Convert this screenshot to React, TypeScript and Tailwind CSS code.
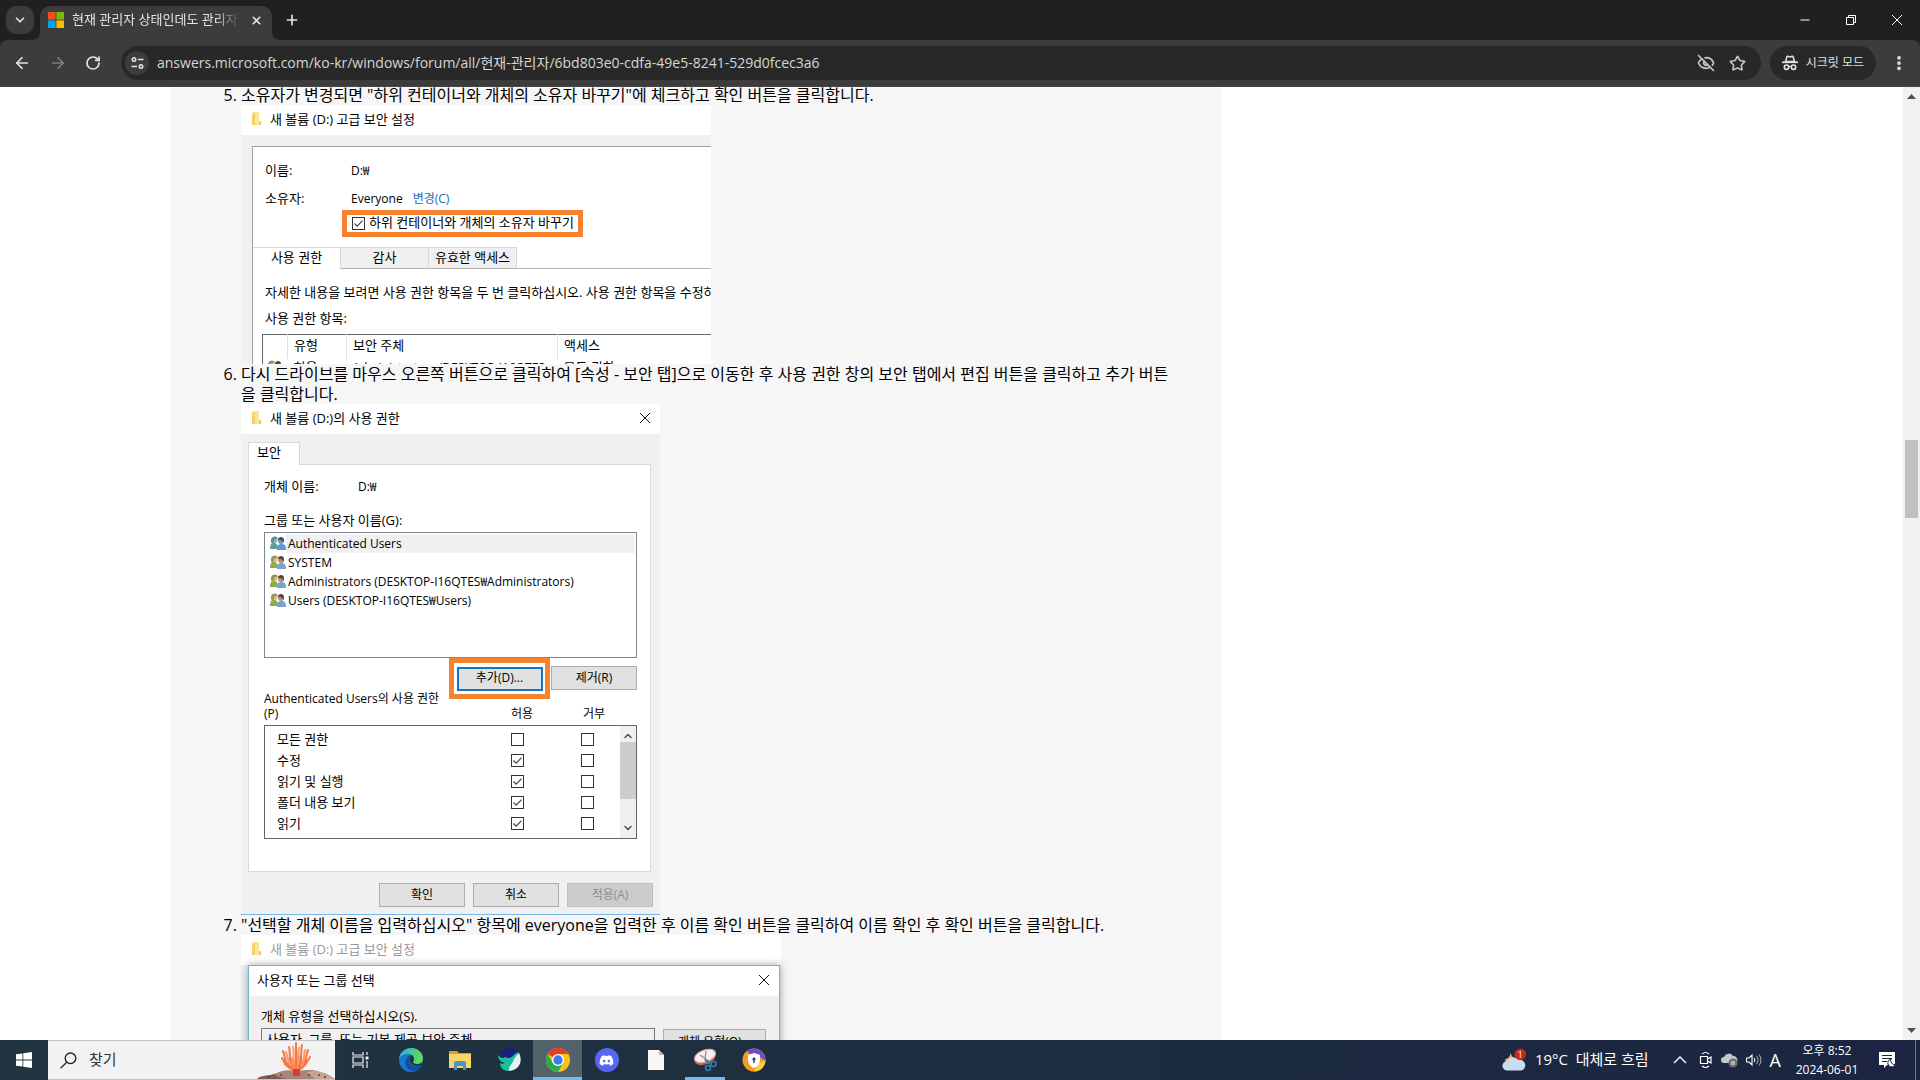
import React from 'react';
import {
  ArrowLeft,
  ArrowRight,
  ChevronDown,
  ChevronUp,
  EyeOff,
  Minus,
  MoreVertical,
  Plus,
  RotateCw,
  Star,
  X,
} from 'lucide-react';
import { FaDiscord } from 'react-icons/fa';

const permissions = [
  { name: '모든 권한', allow: false },
  { name: '수정', allow: true },
  { name: '읽기 및 실행', allow: true },
  { name: '폴더 내용 보기', allow: true },
  { name: '읽기', allow: true },
];

const groups = [
  'Authenticated Users',
  'SYSTEM',
  'Administrators (DESKTOP-I16QTES₩Administrators)',
  'Users (DESKTOP-I16QTES₩Users)',
];

const FolderIcon: React.FC = () => (
  <svg width="10" height="14" viewBox="0 0 10 14" aria-hidden="true">
    <path d="M0 1l1-1h6v9l2 1v3H0z" fill="#fbe39a" />
    <path d="M0 3l3-2v12H0z" fill="#f5d06a" />
    <path d="M8 9h1v4H7z" fill="#e6bd55" />
  </svg>
);

const PeopleIcon: React.FC<{ selected?: boolean }> = ({ selected = false }) => (
  <svg width="16" height="15" viewBox="0 0 16 15" className="shrink-0" aria-hidden="true">
    <path d="M0 13c0-4 1-6 4-6s4 2 4 6z" fill={selected ? '#5f9f98' : '#8dab4c'} />
    <circle cx="4.500" cy="4" r="3" fill={selected ? '#8fb3b8' : '#d3bf8c'} />
    <path d="M1 6c-1-6 6-7 7-3-3-1-4 0-4 3l-2 2z" fill={selected ? '#5d8c94' : '#9a9458'} />
    <path d="M7 14c0-4 1-6 4.500-6S16 10 16 14z" fill={selected ? '#5a98e0' : '#7aa3d4'} />
    <circle cx="11" cy="5" r="3" fill={selected ? '#7f98b4' : '#b58f70'} />
    <path d="M8 4c0-4 6-4 6 0 0 2-1 3-1 3 0-3-2-3-5-3z" fill={selected ? '#3c5068' : '#5a4636'} />
  </svg>
);

const CloseIcon: React.FC = () => (
  <svg width="12" height="12" viewBox="0 0 12 12" stroke="#111111" aria-hidden="true">
    <path d="M1 1l10 10M11 1L1 11" />
  </svg>
);

const CheckBox: React.FC<{ label: string; checked?: boolean; id?: string }> = ({ label, checked, id }) => (
  <span className="relative block h-[13px] w-[13px] shrink-0">
    <input
      type="checkbox"
      id={id}
      aria-label={label}
      defaultChecked={checked}
      className="peer block h-[13px] w-[13px] appearance-none border border-[#333333] bg-white"
    />
    <svg
      viewBox="0 0 13 13"
      className="pointer-events-none absolute inset-0 hidden h-[13px] w-[13px] peer-checked:block"
      aria-hidden="true"
    >
      <path d="M2.500 6.500l2.700 2.700 5.300-5.600" fill="none" stroke="#444444" strokeWidth="1.200" />
    </svg>
  </span>
);

const DialogButton: React.FC<{ children: React.ReactNode; disabled?: boolean; focused?: boolean }> = ({
  children,
  disabled,
  focused,
}) => (
  <button
    type="button"
    disabled={disabled}
    className={
      'flex h-6 w-[86px] items-center justify-center pb-0.5 text-[12px] ' +
      (disabled
        ? 'border border-[#bfbfbf] bg-[#cccccc] text-[#8c8c8c]'
        : focused
          ? 'border-2 border-[#1673bd] bg-[#e1e1e1]'
          : 'border border-[#adadad] bg-[#e1e1e1]')
    }
  >
    {children}
  </button>
);

const IncognitoIcon: React.FC = () => (
  <svg width="16" height="16" viewBox="0 0 16 16" fill="none" stroke="#e3e3e3" aria-hidden="true">
    <path d="M3.500 6.500L5 1.500c1-.6 1.700.4 3 .4s2-1 3-.4l1.500 5z" strokeWidth="1.500" />
    <path d="M0 7.300h16" strokeWidth="1.700" />
    <circle cx="4.500" cy="12.200" r="2.200" strokeWidth="1.600" />
    <circle cx="11.500" cy="12.200" r="2.200" strokeWidth="1.600" />
    <path d="M6.500 11.800q1.500-.8 3 0" strokeWidth="1.300" />
  </svg>
);

const BrowserHeader: React.FC = () => (
  <header className="shrink-0 bg-[#202020] text-[#e3e3e3]">
    <div className="flex h-10 items-center">
      <button type="button" aria-label="탭 검색" className="ml-1.5 flex h-7 w-7 items-center justify-center rounded-[10px] bg-[#3c3c3c]">
        <ChevronDown size={14} strokeWidth={3} />
      </button>
      <div className="relative ml-1.5 flex h-[34px] w-[232px] items-center self-end rounded-t-[10px] bg-[#3c3c3c] px-2 pb-1.5">
        <svg width="8" height="8" viewBox="0 0 8 8" className="absolute bottom-0 -left-2" aria-hidden="true">
          <path d="M8 0v8H0q8 0 8-8z" fill="#3c3c3c" />
        </svg>
        <svg width="8" height="8" viewBox="0 0 8 8" className="absolute -right-2 bottom-0" aria-hidden="true">
          <path d="M0 0v8h8q-8 0-8-8z" fill="#3c3c3c" />
        </svg>
        <svg width="16" height="16" viewBox="0 0 16 16" className="shrink-0" aria-hidden="true">
          <path d="M0 0h7.600v7.600H0z" fill="#f25022" />
          <path d="M8.400 0H16v7.600H8.400z" fill="#7fba00" />
          <path d="M0 8.400h7.600V16H0z" fill="#00a4ef" />
          <path d="M8.400 8.400H16V16H8.400z" fill="#ffb900" />
        </svg>
        <span className="ml-2 flex-1 overflow-hidden mask-r-from-85% text-[13px] whitespace-nowrap">
          현재 관리자 상태인데도 관리자
        </span>
        <button type="button" aria-label="탭 닫기" className="ml-2 flex h-4 w-4 items-center justify-center">
          <X size={13} strokeWidth={3} />
        </button>
      </div>
      <button type="button" aria-label="새 탭" className="ml-3 flex h-4 w-4 items-center justify-center">
        <Plus size={16} strokeWidth={2.5} />
      </button>
      <div className="ml-auto flex h-10">
        <button type="button" aria-label="최소화" className="flex w-[46px] items-center justify-center text-white">
          <Minus size={14} strokeWidth={2} />
        </button>
        <button type="button" aria-label="이전 크기로 복원" className="flex w-[46px] items-center justify-center">
          <svg width="10" height="10" viewBox="0 0 10 10" fill="none" stroke="#ffffff" aria-hidden="true">
            <path d="M.5 2.500h7v7h-7zM2.500 2.500v-2h7v7h-2" />
          </svg>
        </button>
        <button type="button" aria-label="닫기" className="flex w-[46px] items-center justify-center">
          <svg width="10" height="10" viewBox="0 0 10 10" stroke="#ffffff" aria-hidden="true">
            <path d="M0 0l10 10M10 0L0 10" />
          </svg>
        </button>
      </div>
    </div>
    <div className="flex h-[47px] items-center rounded-t-lg border-b border-[#454545] bg-[#3c3c3c] pr-3">
      <div className="flex w-[121px] items-center gap-[18px] pl-[13px]">
        <button type="button" aria-label="뒤로"><ArrowLeft size={18} strokeWidth={2.3} /></button>
        <button type="button" aria-label="앞으로" className="text-[#7e7e7e]"><ArrowRight size={18} strokeWidth={2.3} /></button>
        <button type="button" aria-label="새로고침"><RotateCw size={16} strokeWidth={2.6} /></button>
      </div>
      <div className="flex h-[34px] flex-1 items-center rounded-full bg-[#282828] pr-[15px] pl-1">
        <button type="button" aria-label="사이트 정보 보기" className="flex h-6 w-6 items-center justify-center rounded-full bg-[#3c3c3c]">
          <svg width="13" height="12" viewBox="0 0 13 12" fill="none" stroke="#e3e3e3" strokeWidth="1.600" aria-hidden="true">
            <circle cx="3" cy="2.500" r="1.700" />
            <path d="M7 2.500h5.500M.5 9.500H6" />
            <circle cx="10" cy="9.500" r="1.700" />
          </svg>
        </button>
        <input
          type="text"
          aria-label="주소창"
          defaultValue="answers.microsoft.com/ko-kr/windows/forum/all/현재-관리자/6bd803e0-cdfa-49e5-8241-529d0fcec3a6"
          className="ml-2 min-w-0 flex-1 bg-transparent pb-px text-[14px] text-[#d6d6d6] outline-none"
        />
        <button type="button" aria-label="서드 파티 쿠키 차단됨" className="text-[#c7c7c7]"><EyeOff size={18} strokeWidth={2.3} /></button>
        <button type="button" aria-label="북마크에 추가" className="ml-[14px] text-[#c7c7c7]"><Star size={17} strokeWidth={2.3} /></button>
      </div>
      <button type="button" className="ml-[9px] flex h-[34px] items-center rounded-full bg-[#282828] px-3 text-[12px]">
        <IncognitoIcon />
        <span className="ml-2 pb-px">시크릿 모드</span>
      </button>
      <button type="button" aria-label="메뉴" className="ml-3.5"><MoreVertical size={18} strokeWidth={3} /></button>
    </div>
  </header>
);

const OwnerShot: React.FC = () => (
  <div className="h-[259px] w-[470px] overflow-hidden bg-[#f0f0f0] text-[13px] leading-[15px]">
    <div className="flex h-[30px] items-center gap-2 bg-white pb-0.5 pl-[11px]">
      <FolderIcon />
      <span>새 볼륨 (D:) 고급 보안 설정</span>
    </div>
    <div className="mt-[11px] ml-[11px] border-t border-l border-[#a0a0a0] bg-white">
      <div className="grid grid-cols-[86px_1fr] gap-y-[13px] pt-4 pl-3">
        <span>이름:</span>
        <span className="text-[12px]">D:₩</span>
        <span>소유자:</span>
        <span className="text-[12px]">
          Everyone
          <a href="#change" className="ml-2.5 text-[#1a6bb8]">변경(C)</a>
        </span>
      </div>
      <div className="mt-1 ml-[89px] flex h-[27px] w-[241px] items-center gap-1 border-[5px] border-[#f5832f] pl-[5px]">
        <CheckBox id="replace-owner" label="하위 컨테이너와 개체의 소유자 바꾸기" checked />
        <label htmlFor="replace-owner" className="pb-0.5 whitespace-nowrap">하위 컨테이너와 개체의 소유자 바꾸기</label>
      </div>
      <div className="mt-2.5 flex h-[22px]">
        <button type="button" className="w-[88px] border-t border-r border-[#d9d9d9] bg-white pb-0.5">사용 권한</button>
        <button type="button" className="w-[88px] border-t border-r border-b border-[#d9d9d9] border-b-[#b4b4b4] bg-[#f0f0f0] pb-0.5">감사</button>
        <button type="button" className="w-[88px] border-t border-r border-b border-[#d9d9d9] border-b-[#b4b4b4] bg-[#f0f0f0] pb-0.5">유효한 액세스</button>
        <div className="flex-1 border-b border-[#b4b4b4]" />
      </div>
      <p className="mt-4 pl-3 whitespace-nowrap">
        자세한 내용을 보려면 사용 권한 항목을 두 번 클릭하십시오. 사용 권한 항목을 수정하
      </p>
      <p className="mt-[11px] pl-3">사용 권한 항목:</p>
      <table className="mt-2 ml-[9px] w-[460px] table-fixed border-t border-l border-[#646464] text-left">
        <thead>
          <tr className="h-6">
            <th className="w-[25px] border-r border-[#e0e0e0]" aria-label="아이콘" />
            <th className="w-[59px] border-r border-[#e0e0e0] pb-0.5 pl-1.5 font-normal">유형</th>
            <th className="w-[211px] border-r border-[#e0e0e0] pb-0.5 pl-1.5 font-normal">보안 주체</th>
            <th className="pb-0.5 pl-1.5 font-normal">액세스</th>
          </tr>
        </thead>
        <tbody>
          <tr className="align-top">
            <td className="pt-px pl-1"><PeopleIcon /></td>
            <td className="pt-px pl-1.5">허용</td>
            <td className="pt-px pl-1.5 text-[12px] whitespace-nowrap">Administrators (DESKTOP-I16QTES</td>
            <td className="pt-px pl-1.5">모든 권한</td>
          </tr>
        </tbody>
      </table>
    </div>
  </div>
);

const PermissionShot: React.FC = () => (
  <div className="h-[511px] w-[419px] overflow-hidden border-b border-[#76b9ed] bg-[#f0f0f0] text-[13px] leading-[15px]">
    <div className="flex h-[30px] items-center gap-2 bg-white pr-[9px] pb-0.5 pl-[11px]">
      <FolderIcon />
      <span>새 볼륨 (D:)의 사용 권한</span>
      <button type="button" aria-label="닫기" className="ml-auto">
        <CloseIcon />
      </button>
    </div>
    <div className="px-[7px] pt-2">
      <button type="button" className="relative -mb-px block h-[23px] w-[52px] border border-b-0 border-[#d9d9d9] bg-white pb-1 pl-2 text-left">
        보안
      </button>
      <div className="mr-0.5 h-[408px] border border-[#d9d9d9] bg-white pt-[14px] pr-[13px] pl-[15px]">
        <div className="flex">
          <span className="w-[94px]">개체 이름:</span>
          <span className="text-[12px]">D:₩</span>
        </div>
        <p className="mt-[19px]">그룹 또는 사용자 이름(G):</p>
        <ul className="mt-1 h-[126px] border border-[#828790] py-px pr-px pl-[5px] text-[12px]">
          {groups.map((group, i) => (
            <li key={group} className="flex h-[19px] items-center">
              <PeopleIcon selected={i === 0} />
              <span className={i === 0 ? 'flex h-full flex-1 items-center bg-[#f0f0f0] pl-0.5' : 'pl-0.5'}>{group}</span>
            </li>
          ))}
        </ul>
        <div className="flex items-start justify-end">
          <div className="flex h-[41px] w-[101px] items-center justify-center border-[5px] border-[#f5832f]">
            <DialogButton focused>추가(D)...</DialogButton>
          </div>
          <div className="pt-2 pl-px">
            <DialogButton>제거(R)</DialogButton>
          </div>
        </div>
        <div className="-mt-2 flex items-end text-[12px]">
          <span className="w-[180px]">Authenticated Users의 사용 권한(P)</span>
          <span className="ml-[67px] w-[72px]">허용</span>
          <span>거부</span>
        </div>
        <div className="mt-1 flex h-[114px] border border-[#646464]">
          <div className="flex-1 pt-[3px]">
            {permissions.map((p) => (
              <div key={p.name} className="flex h-[21px] items-center pl-3">
                <span className="w-[234px]">{p.name}</span>
                <CheckBox label={`${p.name} 허용`} checked={p.allow} />
                <span className="w-[57px]" />
                <CheckBox label={`${p.name} 거부`} />
              </div>
            ))}
          </div>
          <div className="flex w-4 flex-col items-center justify-between bg-[#f0f0f0] text-[#505050]">
            <ChevronUp size={12} strokeWidth={3} className="mt-1" />
            <div className="mb-auto h-[57px] w-full bg-[#cdcdcd]" />
            <ChevronDown size={12} strokeWidth={3} className="mb-1" />
          </div>
        </div>
      </div>
      <div className="flex justify-end gap-2 pt-[11px]">
        <DialogButton>확인</DialogButton>
        <DialogButton>취소</DialogButton>
        <DialogButton disabled>적용(A)</DialogButton>
      </div>
    </div>
  </div>
);

const SelectShot: React.FC = () => (
  <div className="w-[540px] bg-[#f0f0f0] text-[13px] leading-[15px]">
    <div className="flex h-[30px] items-center gap-2 bg-white pb-0.5 pl-[11px] text-[#999999]">
      <FolderIcon />
      <span>새 볼륨 (D:) 고급 보안 설정</span>
    </div>
    <div className="mx-[7px] h-[200px] w-[532px] border border-[#6fb4d2] bg-[#f0f0f0] shadow-[0_0_8px_rgba(0,0,0,0.35)]">
      <div className="flex h-[30px] items-center justify-between bg-white pr-[9px] pb-0.5 pl-2">
        <span>사용자 또는 그룹 선택</span>
        <button type="button" aria-label="닫기">
          <CloseIcon />
        </button>
      </div>
      <div className="px-3 pt-[13px]">
        <label htmlFor="object-type">개체 유형을 선택하십시오(S).</label>
        <div className="mt-1 flex gap-2">
          <input
            id="object-type"
            type="text"
            readOnly
            value="사용자, 그룹, 또는 기본 제공 보안 주체"
            className="h-5 w-[394px] border border-[#7a7a7a] bg-[#f0f0f0] px-1"
          />
          <button type="button" className="mt-px h-6 w-[103px] border border-[#adadad] bg-[#e1e1e1] text-[12px]">개체 유형(O)...</button>
        </div>
      </div>
    </div>
  </div>
);

const WindowsTaskbar: React.FC = () => (
  <footer className="flex h-10 shrink-0 items-stretch bg-linear-to-r from-[#20353f] to-[#1b2541] text-white">
    <button type="button" aria-label="시작" className="flex w-12 items-center justify-center">
      <svg width="16" height="16" viewBox="0 0 16 16" fill="#ffffff" aria-hidden="true">
        <path d="M0 2.300l6.500-.9v6.200H0zM7.300 1.300L16 0v7.600H7.300zM0 8.400h6.500v6.200L0 13.700zM7.300 8.400H16V16l-8.700-1.300z" />
      </svg>
    </button>
    <div className="flex w-[287px] items-center border-y border-[#c4c4c4] bg-[#f2f2f2] pl-3 text-[#1f1f1f]">
      <svg width="17" height="17" viewBox="0 0 17 17" fill="none" stroke="#1f1f1f" strokeWidth="1.300" aria-hidden="true">
        <circle cx="10.500" cy="6.300" r="5.300" />
        <path d="M6.700 10.200L.5 16.400" />
      </svg>
      <input
        type="text"
        aria-label="찾기"
        placeholder="찾기"
        className="ml-3 w-[168px] bg-transparent pb-0.5 text-[15px] outline-none placeholder:text-[#333333]"
      />
      <svg width="78" height="38" viewBox="0 0 78 38" className="ml-auto" aria-hidden="true">
        <path d="M0 38c4-4 12-3 17-5 8-3 12-5 22-3 9-1 18-2 24 1 6 1 9 3 15 7z" fill="#a98577" />
        <path d="M0 38c4-4 12-3 17-5 4 3 6 4 14 5z" fill="#7d5a50" />
        <path d="M50 31c8-3 18 1 28 7H58z" fill="#c7a595" />
        <path d="M34 29c-6-3-9-8-8-12l5 4 2-6 5 4 4-6 3 6 5-3c1 5-2 10-7 13z" fill="#ff8a55" />
        <g fill="none" stroke="#f5764c" strokeWidth="2" strokeLinecap="round">
          <path d="M39 30V2" />
          <path d="M37 30C31 22 34 13 32 6" />
          <path d="M36 29C27 24 29 17 26 10" />
          <path d="M41 30C46 22 43 13 45 4" />
          <path d="M42 29C51 24 47 18 51 9" />
          <path d="M35 27C28 24 27 21 25 17" />
          <path d="M42 28C49 25 50 21 53 16" />
          <path d="M37 22C35 16 38 12 36 6" stroke="#ff9a66" />
          <path d="M41 22C42 16 40 12 42 7" stroke="#ff9a66" />
          <path d="M34 24C30 20 31 16 29 11" stroke="#ff9a66" />
          <path d="M45 24C48 20 46 16 48 9" stroke="#ff9a66" />
        </g>
        <path d="M36 28h7v7h-7z" fill="#cf3f35" />
        <g fill="#5c3f3a">
          <circle cx="12" cy="36" r="1" />
          <circle cx="24" cy="34" r="1" />
          <circle cx="52" cy="34" r="1" />
          <circle cx="62" cy="34" r="1" />
          <circle cx="68" cy="36" r="1" />
        </g>
      </svg>
    </div>
    <button type="button" aria-label="작업 보기" className="flex w-[51px] items-center justify-center">
      <svg width="17" height="16" viewBox="0 0 17 16" fill="none" stroke="#f2f2f2" strokeWidth="1.200" aria-hidden="true">
        <path d="M1 0v3h10V0M1 5h10v6H1zM1 16v-3h10v3M15 0v3M15 9v7" />
        <path d="M13.500 4.500h3v3h-3z" fill="#f2f2f2" stroke="none" />
      </svg>
    </button>
    <button type="button" aria-label="Microsoft Edge" className="flex w-[49px] items-center justify-center">
      <svg width="24" height="24" viewBox="0 0 24 24" aria-hidden="true">
        <defs>
          <linearGradient id="edge-a" x1="0" y1="0" x2="1" y2="0.300">
            <stop offset="0" stopColor="#2aa9e0" />
            <stop offset="1" stopColor="#5fdc5c" />
          </linearGradient>
        </defs>
        <circle cx="12" cy="12" r="12" fill="#1579cf" />
        <path d="M0 11C1 4 6 0 12 0c7 0 12 5 12 10 0 4-3 6-6 6-3 0-4-1-4-2s1-1 1-3c0-3-3-5-6-5C5 6 1 8 0 11z" fill="url(#edge-a)" />
        <path d="M8 10c-4 6 0 13 7 13 4 0 7-3 8-6-5 3-14 1-13-6 0-2 1-3 2-4-2 0-3 1-4 3z" fill="#0f4f9e" />
        <path d="M14 14c0-1 1-1 1-3 0-2-1-3-2-4-3 1-3 5-2 7 2 4 8 5 12 3l1-3c-2 2-4 2-6 2-3 0-4-1-4-2z" fill="#20353f" />
      </svg>
    </button>
    <button type="button" aria-label="파일 탐색기" className="flex w-[49px] items-center justify-center">
      <svg width="22" height="20" viewBox="0 0 22 20" aria-hidden="true">
        <path d="M0 1h8l2 2h12v5H0z" fill="#d9a01f" />
        <path d="M0 4h22v14H0z" fill="#fbd567" />
        <path d="M5 20v-7q0-2 2-2h8q2 0 2 2v7h-3v-4H8v4z" fill="#4a94be" />
      </svg>
    </button>
    <button type="button" aria-label="네이버 웨일" className="flex w-[49px] items-center justify-center">
      <svg width="24" height="24" viewBox="0 0 24 24" aria-hidden="true">
        <path d="M3 4C9-1 18-1 21 3c0 5-3 8-8 8C7 11 3 9 3 4z" fill="#1c1f80" />
        <path d="M1 7c2 3 5 4 7 2 3 2 6 1 8-1 2-3 4-3 6-4-1 4-4 7-5 11-1 5-3 8-6 8-5 0-8-4-8-8 1 1 4 1 5 0-5-1-7-4-7-8z" fill="#1ebf9f" />
        <path d="M22 5c4 8 1 17-10 18 0-5 2-6 4-9 1-4 3-6 6-9z" fill="#e3f4f0" />
      </svg>
    </button>
    <button
      type="button"
      aria-label="Chrome"
      className="flex w-[49px] items-center justify-center border-b-[3px] border-[#76b9ed] bg-[#52616a] pt-[3px]"
    >
      <svg width="24" height="24" viewBox="0 0 24 24" aria-hidden="true">
        <circle cx="12" cy="12" r="12" fill="#fbc116" />
        <path d="M12 12L1.600 6A12 12 0 0 1 22.400 6H12z" fill="#e33b2e" />
        <path d="M12 12L6.800 15 1.600 6A12 12 0 0 0 12 24l5.200-9z" fill="#2da94f" />
        <circle cx="12" cy="12" r="6" fill="#ffffff" />
        <circle cx="12" cy="12" r="4.700" fill="#3a7df0" />
      </svg>
    </button>
    <button type="button" aria-label="Discord" className="flex w-[49px] items-center justify-center">
      <span className="flex h-6 w-6 items-center justify-center rounded-full bg-[#5865f2]">
        <FaDiscord size={15} />
      </span>
    </button>
    <button type="button" aria-label="문서" className="flex w-[49px] items-center justify-center">
      <svg width="16" height="22" viewBox="0 0 16 22" aria-hidden="true">
        <path d="M0 1h11l5 5v15H0z" fill="#f7f7f7" />
        <path d="M11 1v5h5z" fill="#b5b5b5" />
      </svg>
    </button>
    <button type="button" aria-label="캡처 도구" className="flex w-[49px] flex-col items-center justify-between pt-2">
      <svg width="24" height="24" viewBox="0 0 24 24" aria-hidden="true">
        <ellipse cx="12" cy="10" rx="11" ry="6.500" transform="rotate(-20 12 10)" fill="#b9605f" />
        <ellipse cx="12" cy="8" rx="11" ry="6" transform="rotate(-20 12 8)" fill="#f7efef" stroke="#d79a9a" />
        <path d="M7 7l10 7M13 3l-1 9" stroke="#8a8f96" strokeWidth="1.300" />
        <path d="M12 12l5 4" stroke="#2f7fae" strokeWidth="2" />
        <circle cx="15" cy="20" r="2.500" fill="none" stroke="#2f7fae" strokeWidth="1.600" />
        <circle cx="20.500" cy="16" r="2.500" fill="none" stroke="#2f7fae" strokeWidth="1.600" />
      </svg>
      <span className="h-[3px] w-10 bg-[#76b9ed]" />
    </button>
    <button type="button" aria-label="보안 브라우저" className="flex w-[49px] items-center justify-center">
      <svg width="24" height="24" viewBox="0 0 24 24" aria-hidden="true">
        <circle cx="12" cy="12" r="11.500" fill="#f59a23" />
        <path d="M5 3C12-3 24 3 23.500 13L18 9 8 6z" fill="#6f4bd0" />
        <path d="M23.500 12c0 6-5 11.500-11.500 11.500l5-8z" fill="#fbd23c" />
        <path d="M12 5l6 2v5c0 4-3 7-6 8-3-1-6-4-6-8V7z" fill="#ffffff" />
        <circle cx="12" cy="11" r="1.600" fill="#3a3a6a" />
        <path d="M11.300 11h1.400v4h-1.400z" fill="#3a3a6a" />
      </svg>
    </button>
    <div className="ml-auto flex items-center">
      <button type="button" className="flex items-center text-[15px]">
        <svg width="25" height="24" viewBox="0 0 26 24" aria-hidden="true">
          <path d="M9 2c0 6 3 9 8 9-3 7-13 6-14 0 4 0 7-5 6-9z" fill="#f4ab3f" />
          <path d="M6 23a5 5 0 0 1-1-10 7 7 0 0 1 12-1 5.500 5.500 0 0 1 3 11z" fill="#c9dcf5" />
          <circle cx="19" cy="6" r="6" fill="#c42b1c" />
          <text x="19" y="9.500" textAnchor="middle" fontSize="9" fill="#ffffff">1</text>
        </svg>
        <span className="ml-2 pb-px">19°C&nbsp; 대체로 흐림</span>
      </button>
      <button type="button" aria-label="숨겨진 아이콘 표시" className="ml-6">
        <svg width="14" height="8" viewBox="0 0 14 8" fill="none" stroke="#ffffff" strokeWidth="1.400" aria-hidden="true">
          <path d="M1 7l6-6 6 6" />
        </svg>
      </button>
      <button type="button" aria-label="모임 시작" className="ml-3">
        <svg width="14" height="18" viewBox="0 0 14 18" fill="none" stroke="#ffffff" strokeWidth="1.200" aria-hidden="true">
          <path d="M1.500 5.500h7v7h-7zM8.500 8l3.500-2v6l-3.500-2M3 3q3.500-3 7 0M3 15q3.500 3 7 0" />
        </svg>
      </button>
      <button type="button" aria-label="OneDrive" className="ml-2">
        <svg width="17" height="16" viewBox="0 0 17 16" aria-hidden="true">
          <path d="M3 11a3 3 0 0 1 0-6 5 5 0 0 1 9-1 4 4 0 0 1 3 7z" fill="#c4c8cc" />
          <circle cx="12" cy="11" r="4.500" fill="#6e6e6e" />
          <path d="M11 9v4M13 9v4" stroke="#ffffff" />
        </svg>
      </button>
      <button type="button" aria-label="볼륨" className="ml-2">
        <svg width="16" height="14" viewBox="0 0 16 14" fill="none" stroke="#ffffff" strokeWidth="1.100" aria-hidden="true">
          <path d="M.5 5v4H3l3 3V2L3 5zM8 5q1.500 2 0 4" />
          <path d="M10.500 3q3 4 0 8M13 1.500q4 5.500 0 11" stroke="#9aa0b0" />
        </svg>
      </button>
      <span className="ml-2 text-[18px]">A</span>
      <div className="ml-2 w-[76px] text-center text-[12px] leading-[19px]">
        <div>오후 8:52</div>
        <div>2024-06-01</div>
      </div>
      <button type="button" aria-label="알림" className="ml-[14px]">
        <svg width="17" height="16" viewBox="0 0 17 16" aria-hidden="true">
          <path d="M0 0h16v13h-8l-3 3v-3H0z" fill="#ffffff" />
          <path d="M3 3.500h10M3 6.500h10M3 9.500h5" stroke="#1b2541" />
          <path d="M12 7a4 4 0 1 0 4.500 5.500A4 4 0 0 1 12 7z" fill="#ffffff" stroke="#1b2541" />
        </svg>
      </button>
      <span className="ml-[19px] h-10 w-[5px] border-l border-[#6d7488]" />
    </div>
  </footer>
);

const App: React.FC = () => {
  return (
    <div className="flex h-screen flex-col overflow-hidden bg-white font-[Open_Sans,Noto_Sans_CJK_KR,sans-serif] text-black">
      <BrowserHeader />
      <div className="flex min-h-0 flex-1">
        <main className="flex-1 overflow-hidden pl-[170px]">
          <div className="min-h-full w-[1051px] bg-[#f6f6f6] pr-11 pl-[71px]">
            <ol start={5} className="-mt-0.5 list-decimal text-[16px] leading-5">
              <li>
                <p>소유자가 변경되면 "하위 컨테이너와 개체의 소유자 바꾸기"에 체크하고 확인 버튼을 클릭합니다.</p>
                <OwnerShot />
              </li>
              <li>
                <p className="break-all">
                  다시 드라이브를 마우스 오른쪽 버튼으로 클릭하여 [속성 - 보안 탭]으로 이동한 후 사용 권한 창의 보안 탭에서 편집 버튼을 클릭하고 추가 버튼을 클릭합니다.
                </p>
                <PermissionShot />
              </li>
              <li>
                <p>"선택할 개체 이름을 입력하십시오" 항목에 everyone을 입력한 후 이름 확인 버튼을 클릭하여 이름 확인 후 확인 버튼을 클릭합니다.</p>
                <SelectShot />
              </li>
            </ol>
          </div>
        </main>
        <div className="flex w-[17px] shrink-0 flex-col items-center bg-[#f1f1f1]">
          <svg width="9" height="5" viewBox="0 0 9 5" className="mt-[7px]" aria-hidden="true">
            <path d="M0 5l4.500-5L9 5z" fill="#505050" />
          </svg>
          <div className="mt-[341px] h-[78px] w-[13px] bg-[#c1c1c1]" />
          <svg width="9" height="5" viewBox="0 0 9 5" className="mt-auto mb-[7px]" aria-hidden="true">
            <path d="M0 0l4.500 5L9 0z" fill="#505050" />
          </svg>
        </div>
      </div>
      <WindowsTaskbar />
    </div>
  );
};

export default App;
